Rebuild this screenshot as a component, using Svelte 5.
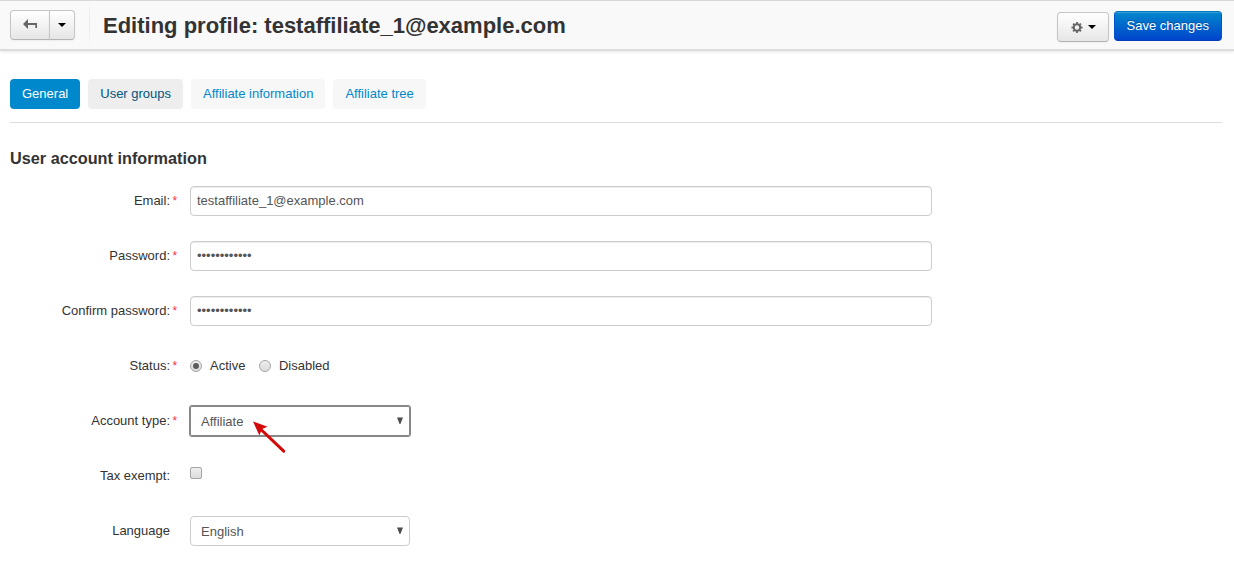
<script>
  const tabs = [
    { label: 'General', kind: 'active' },
    { label: 'User groups', kind: 'hover' },
    { label: 'Affiliate information', kind: '' },
    { label: 'Affiliate tree', kind: '' }
  ];
  const dots = '•'.repeat(12);
  const rows = [
    { label: 'Email:', required: true, type: 'text', value: 'testaffiliate_1@example.com' },
    { label: 'Password:', required: true, type: 'text', value: dots },
    { label: 'Confirm password:', required: true, type: 'text', value: dots },
    { label: 'Status:', required: true, type: 'radio' },
    { label: 'Account type:', required: true, type: 'select', value: 'Affiliate', focus: true },
    { label: 'Tax exempt:', required: false, type: 'checkbox' },
    { label: 'Language', required: false, type: 'select', value: 'English' }
  ];
</script>

<div class="page">
  <header>
    <div class="group">
      <button class="btn back" aria-label="Back">
        <svg width="14" height="12" viewBox="0 0 14 12"><path d="M0 5L5 0V4H14V9H12.3V6H5V10Z" fill="#666" /></svg>
      </button>
      <button class="btn more" aria-label="More"><i class="caret"></i></button>
    </div>
    <span class="divider"></span>
    <h1>Editing profile: testaffiliate_1@example.com</h1>
    <button class="btn gear" aria-label="Settings">
      <svg width="12" height="11" viewBox="-0.5 0 12 11">
        <circle cx="5.5" cy="5.5" r="3.2" fill="none" stroke="#666" stroke-width="2" />
        <path d="M5.5 0V2M5.5 9V11M0 5.5H2M9 5.5H11M1.6 1.6L3 3M8 8L9.4 9.4M9.4 1.6L8 3M3 8L1.6 9.4" stroke="#666" stroke-width="1.8" />
      </svg>
      <i class="caret"></i>
    </button>
    <button class="save">Save changes</button>
  </header>

  <nav>
    {#each tabs as tab}
      <span class="tab {tab.kind}">{tab.label}</span>
    {/each}
  </nav>

  <h2>User account information</h2>

  <form>
    {#each rows as row}
      <div class="row">
        <span class="label">{row.label}</span>
        <span class="star">{row.required ? '*' : ''}</span>
        {#if row.type === 'text'}
          <div class="input">{row.value}</div>
        {:else if row.type === 'select'}
          <div class="select" class:focus={row.focus}>
            <span>{row.value}</span>
            <svg width="6" height="7" viewBox="0 0 6 7"><path d="M0 0.5H6L3.4 7H2.6Z" fill="#4c4c4c" /></svg>
            {#if row.focus}
              <svg class="pointer" width="36" height="36" viewBox="0 0 36 36">
                <path d="M9 8.5L31.7 30.2" stroke="#d40a0a" stroke-width="3" stroke-linecap="round" />
                <path d="M1 0.5L15.5 5.8L10 8L7.4 14.5Z" fill="#d40a0a" />
              </svg>
            {/if}
          </div>
        {:else if row.type === 'radio'}
          <span class="radio on"></span><span class="opt">Active</span>
          <span class="radio"></span><span class="opt last">Disabled</span>
        {:else}
          <span class="check"></span>
        {/if}
      </div>
    {/each}
  </form>
</div>

<style>
  :global(body) { margin: 0; background: #fff; }
  .page {
    height: 565px;
    overflow: hidden;
    font: 13px/20px "Liberation Sans", Arial, sans-serif;
    color: #333;
  }
  header {
    display: flex;
    align-items: flex-start;
    box-sizing: border-box;
    height: 51px;
    padding: 0 12px 0 10px;
    border-top: 1px solid #d8d8d8;
    border-bottom: 2px solid #dcdcdc;
    background: #f9f9f9;
    box-shadow: 0 1px 3px rgba(0, 0, 0, 0.1);
  }
  button { font: inherit; margin: 0; padding: 0; box-sizing: border-box; }
  .group { display: flex; margin-top: 9px; }
  .btn {
    display: flex;
    align-items: center;
    justify-content: center;
    height: 30px;
    border: 1px solid #c5c5c5;
    border-bottom-color: #b3b3b3;
    border-radius: 4px;
    background: linear-gradient(#fff, #e6e6e6);
    box-shadow: 0 1px 2px rgba(0, 0, 0, 0.05);
  }
  .back { width: 40px; border-radius: 4px 0 0 4px; }
  .more { width: 26px; margin-left: -1px; border-radius: 0 4px 4px 0; }
  .caret { border: 4px solid transparent; border-top-color: #000; border-bottom: 0; }
  .divider {
    width: 1px;
    height: 46px;
    margin-left: 14px;
    background: linear-gradient(#f9f9f9, #e8e8e8, #f9f9f9);
  }
  h1 { margin: 10px auto 0 13px; font-size: 22px; line-height: 30px; font-weight: bold; white-space: nowrap; }
  .gear { width: 52px; margin: 11px 5px 0 0; padding-left: 1px; gap: 5px; }
  .save {
    width: 108px;
    height: 30px;
    margin-top: 10px;
    padding-right: 0.5px;
    border: 1px solid #0055cc;
    border-color: #0077c4 #0055cc #003fb3;
    border-radius: 4px;
    color: #fff;
    text-shadow: 0 -1px 0 rgba(0, 0, 0, 0.25);
    background: linear-gradient(#0088cc, #0044cc);
    box-shadow: inset 0 1px 0 rgba(255, 255, 255, 0.2);
  }
  nav {
    display: flex;
    gap: 8px;
    margin: 28px 12px 0 10px;
    padding-bottom: 13px;
    border-bottom: 1px solid #ddd;
  }
  .tab {
    height: 30px;
    line-height: 29px;
    padding: 0 12px;
    border-radius: 4px;
    background: #f7f7f7;
    color: #0088cc;
  }
  .tab.active { background: #0088cc; color: #fff; }
  .tab.hover { background: #eee; color: #005580; }
  h2 { margin: 25px 0 18px 10px; font-size: 16.25px; line-height: 20px; font-weight: bold; }
  .row { display: flex; align-items: center; height: 30px; margin-bottom: 25px; }
  .label { width: 170px; text-align: right; }
  .star { width: 17.5px; padding-left: 2.5px; color: #f5304a; font-size: 12px; }
  .input, .select {
    box-sizing: border-box;
    height: 30px;
    border: 1px solid #ccc;
    border-radius: 4px;
    color: #555;
  }
  .input { width: 742px; padding: 0 6px; line-height: 28px; box-shadow: inset 0 1px 1px rgba(0, 0, 0, 0.075); }
  .select {
    position: relative;
    display: flex;
    align-items: center;
    justify-content: space-between;
    width: 220px;
    padding: 1px 6px 0 10px;
  }
  .select > svg { margin-top: -2px; }
  .select.focus { border-color: #888; border-radius: 2px; box-shadow: 0 0 0 1px #888; }
  .select > .pointer { position: absolute; left: 61px; top: 16px; }
  .radio {
    position: relative;
    box-sizing: border-box;
    width: 12px;
    height: 12px;
    margin-right: 8px;
    border: 1px solid #a5a5a5;
    border-radius: 50%;
    background: linear-gradient(#eee, #dcdcdc);
  }
  .radio.on::after {
    content: '';
    position: absolute;
    inset: 2px;
    border-radius: 50%;
    background: #5c5c5c;
  }
  .opt { margin-right: 14px; }
  .opt.last { margin-left: -0.5px; }
  .check {
    box-sizing: border-box;
    width: 12px;
    height: 12px;
    margin-top: -6px;
    border: 1px solid #a5a5a5;
    border-radius: 2px;
    background: linear-gradient(#eee, #dcdcdc);
  }
</style>
